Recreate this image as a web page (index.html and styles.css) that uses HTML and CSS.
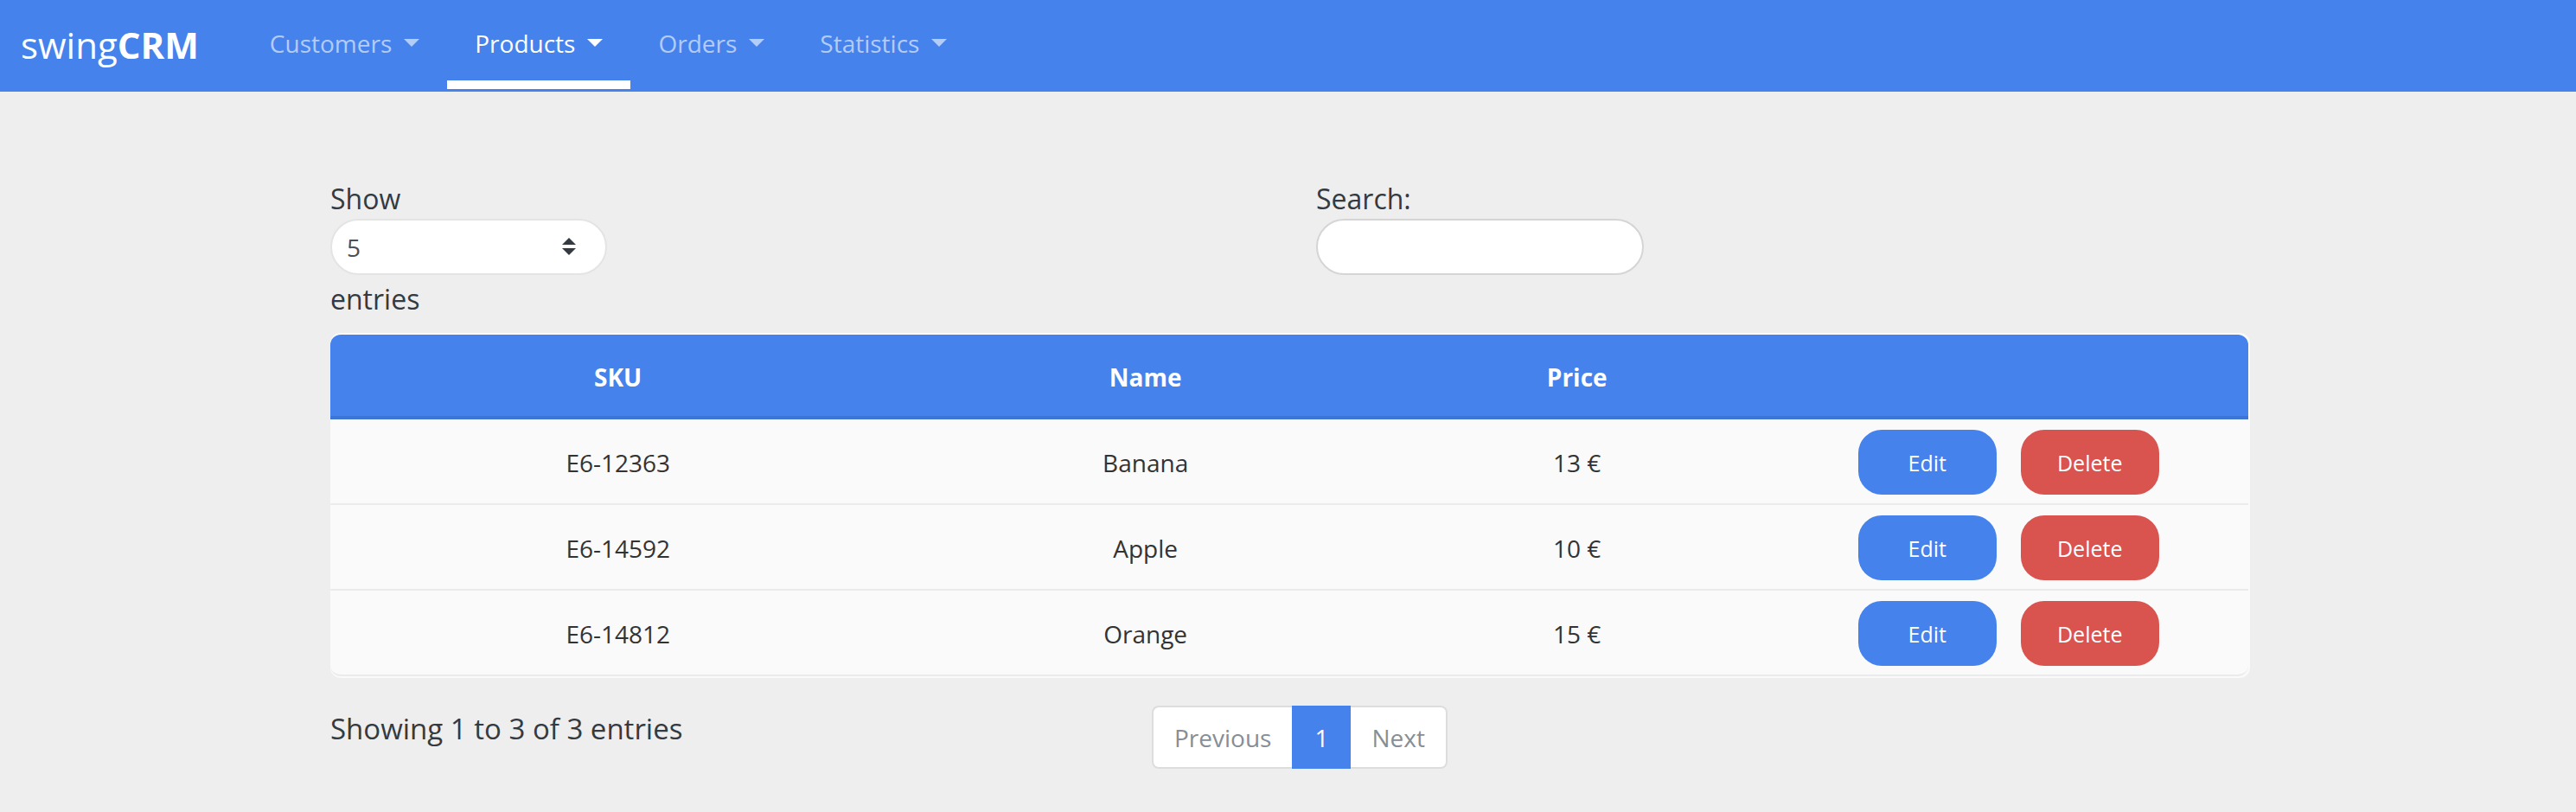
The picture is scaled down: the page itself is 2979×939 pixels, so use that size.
FILE: index.html
```html
<!DOCTYPE html>
<html lang="en">
<head>
<meta charset="utf-8">
<meta name="viewport" content="width=device-width, initial-scale=1">
<title>swingCRM – Products</title>
<link rel="stylesheet" href="styles.css">
</head>
<body>
<header class="navbar">
  <a class="brand" href="#">swing<b>CRM</b></a>
  <nav class="nav">
    <a class="nav-link" href="#">Customers<span class="caret"></span></a>
    <a class="nav-link active" href="#" aria-current="page">Products<span class="caret"></span></a>
    <a class="nav-link" href="#">Orders<span class="caret"></span></a>
    <a class="nav-link" href="#">Statistics<span class="caret"></span></a>
  </nav>
</header>
<main class="container">
  <div class="row controls">
    <div class="col-half field">
      <label for="length">Show</label>
      <span class="select-wrap">
        <select id="length" class="control select" aria-describedby="length-unit">
          <option>5</option>
          <option>10</option>
          <option>25</option>
        </select>
        <svg class="select-icon" viewBox="0 0 16 20" aria-hidden="true"><path d="M0 8 8 0l8 8zM0 12l8 8 8-8z"/></svg>
      </span>
      <span id="length-unit">entries</span>
    </div>
    <div class="col-half field">
      <label for="search">Search:</label>
      <input id="search" class="control search" type="search">
    </div>
  </div>
  <div class="table-card">
    <table class="table">
      <colgroup><col class="w-sku"><col class="w-name"><col class="w-price"><col class="w-actions"></colgroup>
      <thead>
        <tr><th scope="col">SKU</th><th scope="col">Name</th><th scope="col">Price</th><th></th></tr>
      </thead>
      <tbody>
        <tr><td>E6-12363</td><td>Banana</td><td>13 €</td><td><div class="actions"><button type="button" class="btn btn-edit">Edit</button><button type="button" class="btn btn-delete">Delete</button></div></td></tr>
        <tr><td>E6-14592</td><td>Apple</td><td>10 €</td><td><div class="actions"><button type="button" class="btn btn-edit">Edit</button><button type="button" class="btn btn-delete">Delete</button></div></td></tr>
        <tr><td>E6-14812</td><td>Orange</td><td>15 €</td><td><div class="actions"><button type="button" class="btn btn-edit">Edit</button><button type="button" class="btn btn-delete">Delete</button></div></td></tr>
      </tbody>
    </table>
  </div>
  <div class="row footer">
    <div class="col-info">Showing 1 to 3 of 3 entries</div>
    <nav class="col-pages pagination" aria-label="Pages">
      <a class="page" href="#">Previous</a>
      <a class="page current" href="#" aria-current="page">1</a>
      <a class="page" href="#">Next</a>
    </nav>
  </div>
</main>
</body>
</html>
```
FILE: styles.css
```css
* { box-sizing: border-box; }

body {
  margin: 0;
  background: #eee;
  color: #343a40;
  font-family: "Segoe UI", "Open Sans", "Noto Sans", sans-serif;
  font-size: 28px;
  line-height: 44px;
}

a { text-decoration: none; }

/* Top bar */
.navbar {
  display: flex;
  align-items: stretch;
  height: 106px;
  padding: 0 24px;
  background: #4582ec;
}
.brand {
  display: flex;
  align-items: center;
  margin-right: 50px;
  padding-bottom: 2px;
  color: #fff;
  font-size: 42px;
}
.nav { display: flex; }
.nav-link {
  display: flex;
  align-items: center;
  gap: 14px;
  margin-bottom: 3px;
  padding: 6px 32px 0;
  border-bottom: 10px solid transparent;
  color: rgba(255, 255, 255, .6);
}
.nav-link.active { color: #fff; border-bottom-color: #fff; }
.caret {
  border: 9px solid transparent;
  border-top-color: currentColor;
  border-bottom: 0;
}

/* Page content */
.container {
  max-width: 2285px;
  margin: 0 auto;
  padding: 100px 30px 40px 35px;
}
.row {
  display: grid;
  grid-template-columns: repeat(12, 1fr);
  column-gap: 60px;
}
.col-half { grid-column: span 6; }
.col-info { grid-column: span 5; }
.col-pages { grid-column: span 7; }

.field {
  display: flex;
  flex-direction: column;
  align-items: flex-start;
  font-size: 32px;
  line-height: 47px;
}
.control {
  height: 65px;
  border: 2px solid #d5d5d5;
  border-radius: 33px;
  background: #fff;
  color: #495057;
  font: inherit;
  font-size: 28px;
}
.search { width: 379px; padding: 0 20px; }
.select-wrap { position: relative; width: 320px; margin-bottom: 4px; }
.select {
  display: block;
  appearance: none;
  width: 100%;
  padding: 2px 60px 0 17px;
  border-color: #e4e4e4;
}
.select-icon {
  position: absolute;
  top: 22px;
  right: 36px;
  width: 16px;
  height: 20px;
  fill: #343a40;
  pointer-events: none;
}

/* Product table */
.table-card {
  margin-top: 16px;
  padding: 2px 2px 2px 0;
  border-radius: 12px;
  background: #fafafa;
}
.table {
  width: 100%;
  table-layout: fixed;
  border-collapse: separate;
  border-spacing: 0;
  color: #333;
  text-align: center;
}
.w-sku { width: 30%; }
.w-name { width: 25%; }
.w-price { width: 20%; }
.w-actions { width: 25%; }
th {
  height: 98px;
  padding: 4px 0 0;
  border-bottom: 4px solid #3f76d5;
  background: #4582ec;
  color: #fff;
  font-weight: 700;
}
th:first-child { border-top-left-radius: 12px; }
th:last-child { border-top-right-radius: 12px; }
td {
  height: 99px;
  padding: 2px 0 0;
  border-bottom: 2px solid #ebebeb;
}
tr:last-child td:first-child { border-bottom-left-radius: 12px; }
tr:last-child td:last-child { border-bottom-right-radius: 12px; }
.actions { display: flex; justify-content: center; gap: 28px; }
.btn {
  width: 160px;
  height: 75px;
  padding: 0;
  border: 0;
  border-radius: 27px;
  color: #fff;
  font: inherit;
  font-size: 25px;
}
.btn-edit { background: #4582ec; }
.btn-delete { background: #d9534f; }

/* Table footer */
.footer { margin-top: 32px; }
.col-info { font-size: 33px; line-height: 54px; }
.pagination { display: flex; }
.page {
  height: 73px;
  padding: 13px 24px 0;
  border: 2px solid #ddd;
  background: #fff;
  color: #868e96;
}
.page:first-child { border-right: 0; border-radius: 8px 0 0 8px; }
.page:last-child { border-left: 0; border-radius: 0 8px 8px 0; }
.page.current { border-color: #4582ec; background: #4582ec; color: #fff; }
```
